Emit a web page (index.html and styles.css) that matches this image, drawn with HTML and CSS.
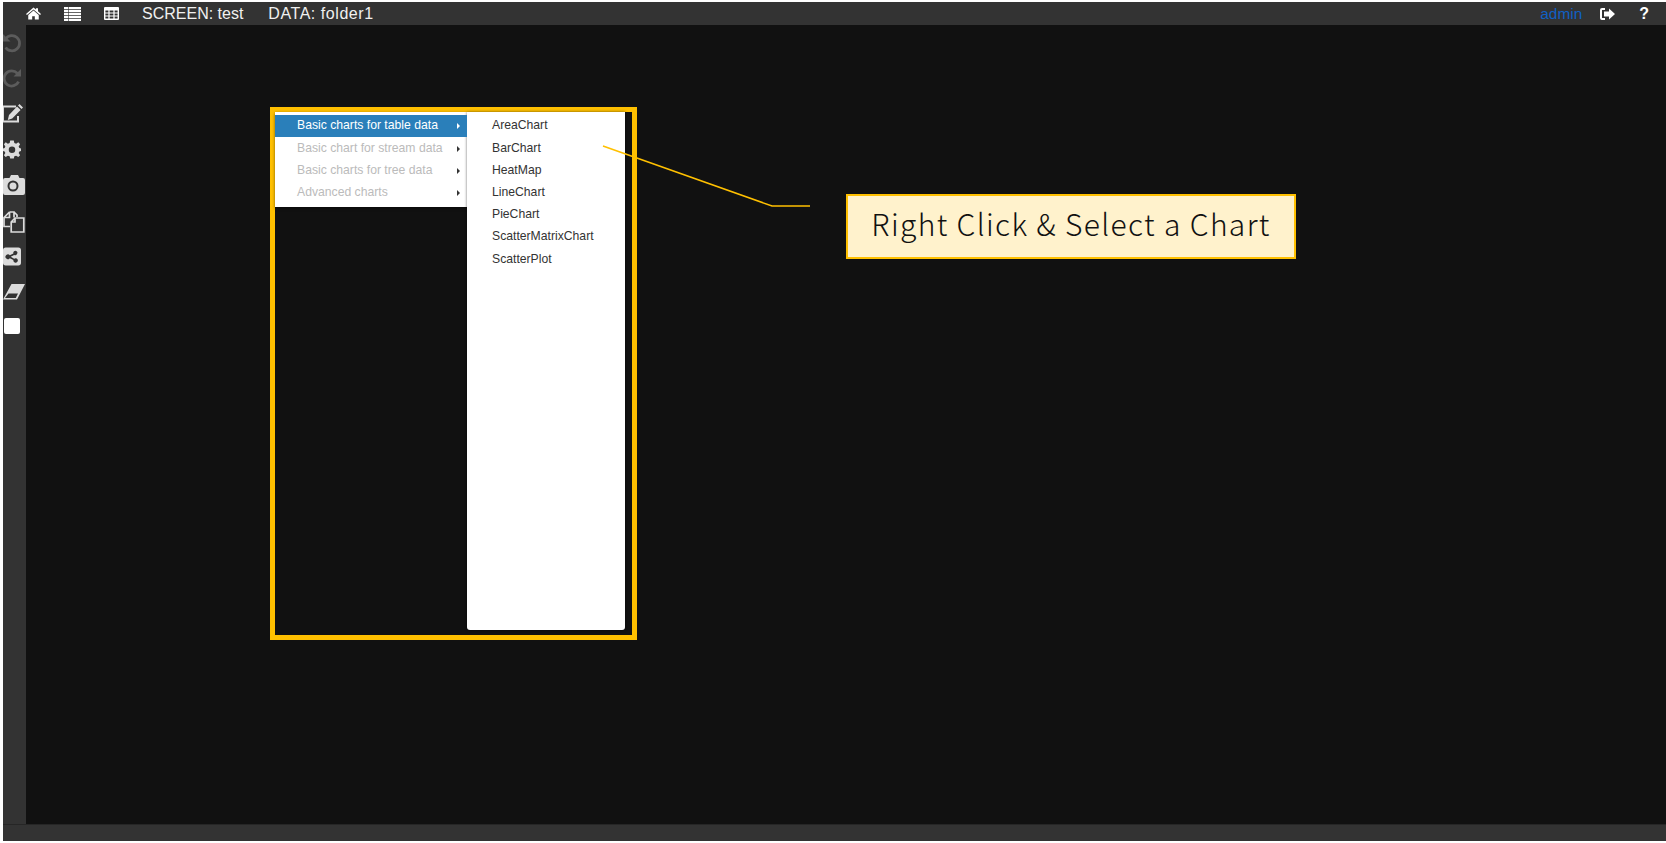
FILE: index.html
```html
<!DOCTYPE html>
<html lang="en">

<head>
    <meta charset="UTF-8" />
    <title>SCREEN: test</title>
    <link rel="stylesheet" href="styles.css">
</head>

<body>
    <div class="app">
        <div class="topbar">
            <svg class="nav-home" viewBox="0 0 16 13"><path d="M8 0 10.6 2.3V1H12.8V4.2L16 7 15 8 8 2.1 1 8 0 7ZM2.4 8 8 3.3 13.6 8V13H9.4V9.4H6.6V13H2.4Z"/></svg>
            <svg class="nav-list" viewBox="0 0 17 14"><path d="M0 0H4V2.2H0ZM0 3H4V5.2H0ZM0 6H4V8.2H0ZM0 9H4V11.2H0ZM0 12H4V14H0ZM4.6 0H17V2.2H4.6ZM4.6 3H17V5.2H4.6ZM4.6 6H17V8.2H4.6ZM4.6 9H17V11.2H4.6ZM4.6 12H17V14H4.6Z"/></svg>
            <svg class="nav-table" viewBox="0 0 15 13"><path fill-rule="evenodd" d="M1 0H14Q15 0 15 1V12Q15 13 14 13H1Q0 13 0 12V1Q0 0 1 0ZM1.4 3.6V5.6H4.4V3.6ZM5.6 3.6V5.6H9.4V3.6ZM10.6 3.6V5.6H13.6V3.6ZM1.4 6.6V8.6H4.4V6.6ZM5.6 6.6V8.6H9.4V6.6ZM10.6 6.6V8.6H13.6V6.6ZM1.4 9.6V11.6H4.4V9.6ZM5.6 9.6V11.6H9.4V9.6ZM10.6 9.6V11.6H13.6V9.6Z"/></svg>
            <span class="nav-text screen-name">SCREEN: test</span>
            <span class="nav-text data-name">DATA: folder1</span>
            <span class="user">admin</span>
            <svg class="nav-out" viewBox="0 0 15 12"><path d="M5 0V2H2.2Q2 2 2 2.2V9.8Q2 10 2.2 10H5V12H2Q0 12 0 10V2Q0 0 2 0ZM9 .5 15 6 9 11.5V8.5H4V3.5H9Z"/></svg>
            <span class="help">?</span>
        </div>
        <div class="main">
            <div class="sidebar">
                <svg class="tool tool-off" viewBox="0 0 20 20"><path d="M0 1V8.5H7.5Z" class="fill-off"/><path d="M2.6 6A7.6 7.6 0 1 1 2.6 14.4" fill="none" stroke-width="2.8"/></svg>
                <svg class="tool tool-off" viewBox="0 0 20 20"><path d="M14.4 5.4A7.6 7.6 0 1 0 15.6 13.6" fill="none" stroke-width="2.8"/><path d="M18 1V8.5H10.5Z" class="fill-off"/></svg>
                <svg class="tool" viewBox="0 0 20 20"><path d="M0 1.5H13V3.5H1V16.5H14V12H16V18.5H0Z"/><path d="M16.5 0 20 3.4 18.5 5 15 1.5ZM14 2.5 17.6 6 9.2 14.6 4.8 16 6 11Z"/></svg>
                <svg class="tool tool-gear" viewBox="0 0 20 20"><path fill-rule="evenodd" d="M8 0H12L12.6 2.8 14.6 3.6 17 2 19 4.2 17.4 6.6 18.2 8.4 20 8.8V11.6L18.2 12.2 17.4 14 19 16.4 17 18.4 14.6 17 12.6 17.6 12 20H8L7.4 17.6 5.4 17 3 18.4 1 16.4 2.6 14 1.8 12.2 0 11.6V8.8L1.8 8.4 2.6 6.6 1 4.2 3 2 5.4 3.6 7.4 2.8ZM10 6.6A3.6 3.6 0 1 0 10 13.8 3.6 3.6 0 0 0 10 6.6Z"/></svg>
                <svg class="tool tool-wide" viewBox="0 0 22 20"><path fill-rule="evenodd" d="M2 3H6.5L8 0H15L16.5 3H20Q22 3 22 5V18Q22 20 20 20H2Q0 20 0 18V5Q0 3 2 3ZM10 5.5A5.5 5.5 0 1 0 10 16.5 5.5 5.5 0 0 0 10 5.5ZM10 7.5A3.5 3.5 0 1 1 10 14.5 3.5 3.5 0 0 1 10 7.5Z"/></svg>
                <svg class="tool tool-wide tool-copy" viewBox="0 0 22 22"><path d="M6.5 1H11V6.5M6.5 1 1 6.5V15.5H7M1 6.5H6.5V1M11 1 14 4V6"/><path d="M12 7H20.8V21H8.2V11ZM12 7V11H8.2"/></svg>
                <svg class="tool tool-share" viewBox="0 0 20 20"><path fill-rule="evenodd" d="M3 0H17Q20 0 20 3V17Q20 20 17 20H3Q0 20 0 17V3Q0 0 3 0ZM14 3.5A2.5 2.5 0 0 0 11.5 6.6L7.6 8.6A2.7 2.7 0 1 0 7.6 12L11.5 14A2.5 2.5 0 1 0 12.4 12.4L8.6 10.3 12.4 8.2A2.5 2.5 0 1 0 14 3.5Z"/></svg>
                <svg class="tool tool-wide tool-eraser" viewBox="0 0 22 16"><path fill-rule="evenodd" d="M8.5 0H22L14 15.5H0ZM5.5 9.5 2 14H12.8L15 9.5Z"/></svg>
                <div class="color-box"></div>
            </div>
            <div class="canvas"></div>
        </div>
        <div class="footer"></div>
    </div>

    <div class="highlight"></div>

    <div class="menu">
        <ul class="menu-list">
            <li class="active">Basic charts for table data</li>
            <li class="off">Basic chart for stream data</li>
            <li class="off">Basic charts for tree data</li>
            <li class="off">Advanced charts</li>
        </ul>
        <ul class="submenu">
            <li>AreaChart</li>
            <li>BarChart</li>
            <li>HeatMap</li>
            <li>LineChart</li>
            <li>PieChart</li>
            <li>ScatterMatrixChart</li>
            <li>ScatterPlot</li>
        </ul>
    </div>

    <svg class="leader" viewBox="0 0 210 64"><path d="M1 1 170 61H208"/></svg>
    <div class="callout">Right Click &amp; Select a Chart</div>
</body>

</html>
```

FILE: styles.css
```css
html, body {
    height: 100%;
}
body {
    margin: 0;
    background: #fff;
    padding: 2px 0 2px 3px;
    box-sizing: border-box;
    overflow: hidden;
    font-family: 'Liberation Sans', Arial, sans-serif;
}
.app {
    height: 100%;
    display: flex;
    flex-direction: column;
    background: #333;
}
.topbar {
    height: 23px;
    display: flex;
    align-items: center;
    color: #fff;
    flex-shrink: 0;
}
.topbar svg {
    fill: #fff;
    flex-shrink: 0;
}
.nav-home {
    width: 15px;
    height: 13px;
    margin-left: 23px;
}
.nav-list {
    width: 17px;
    height: 14px;
    margin-left: 23px;
}
.nav-table {
    width: 15px;
    height: 13px;
    margin-left: 23px;
}
.nav-text {
    font-size: 16px;
    color: #f0f0f0;
}
.screen-name {
    margin-left: 23px;
    margin-right: 25px;
}
.data-name {
    letter-spacing: 0.55px;
}
.user {
    margin-left: auto;
    font-size: 15.4px;
    color: #1060c4;
}
.nav-out {
    width: 15px;
    height: 12px;
    margin-left: 18px;
}
.help {
    margin-left: 24px;
    margin-right: 17px;
    font-size: 16px;
    font-weight: bold;
}
.main {
    flex: 1;
    display: flex;
    min-height: 0;
}
.sidebar {
    width: 23px;
    flex-shrink: 0;
    overflow: hidden;
    padding-top: 7.5px;
    box-sizing: border-box;
    display: flex;
    flex-direction: column;
    align-items: flex-start;
}
.tool {
    width: 20px;
    height: 20px;
    flex-shrink: 0;
    margin-bottom: 15.7px;
    fill: #dcdcdc;
}
.tool-off {
    fill: none;
    stroke: #5c5c5c;
}
.fill-off {
    fill: #5c5c5c;
    stroke: none;
}
.tool-gear, .tool-share {
    width: 18px;
    height: 19px;
}
.tool-gear {
    margin-bottom: 16.7px;
}
.tool-share {
    margin-bottom: 16.7px;
}
.tool-wide {
    width: 22px;
}
.tool-copy {
    fill: none;
    stroke: #dcdcdc;
    stroke-width: 1.7;
    height: 22px;
    margin-bottom: 14px;
}
.tool-eraser {
    height: 16px;
    margin-top: 1px;
    margin-bottom: 18px;
}
.color-box {
    width: 16px;
    height: 16px;
    margin: 0 0 0 1px;
    background: #fff;
    border-radius: 2px;
}
.canvas {
    flex: 1;
    background: #111;
}
.footer {
    height: 17px;
    flex-shrink: 0;
    border-top: 1px solid #262626;
    box-sizing: border-box;
}
.highlight {
    position: absolute;
    left: 270px;
    top: 107px;
    width: 367px;
    height: 533px;
    border: 5px solid #ffc000;
    box-sizing: border-box;
}
.menu {
    position: absolute;
    left: 275px;
    top: 112px;
    display: flex;
    align-items: flex-start;
    font-size: 12.2px;
}
.menu ul {
    margin: 0;
    list-style: none;
    background: #fff;
    padding: 3.4px 0 0;
    box-sizing: border-box;
}
.menu li {
    height: 22.2px;
    line-height: 21px;
    white-space: nowrap;
}
.menu-list {
    width: 192px;
    height: 95px;
    box-shadow: 0 1px 3px rgba(0, 0, 0, 0.5);
}
.menu-list li {
    padding-left: 22px;
    position: relative;
}
.menu-list li::after {
    content: "";
    position: absolute;
    right: 7px;
    top: 8px;
    border-left: 3px solid #333;
    border-top: 3px solid transparent;
    border-bottom: 3px solid transparent;
}
.menu-list .active {
    height: 21.2px;
    margin-bottom: 1px;
    background: #2a7fba;
    color: #fff;
}
.menu-list .active::after {
    border-left-color: #fff;
}
.menu-list .off {
    color: #bbb;
}
.submenu {
    width: 158px;
    height: 518px;
    border-radius: 0 0 3px 3px;
    box-shadow: 0 0 3px rgba(0, 0, 0, 0.6);
    color: #333;
}
.submenu li {
    padding-left: 25px;
}
.leader {
    position: absolute;
    left: 602px;
    top: 145px;
    width: 210px;
    height: 64px;
    fill: none;
    stroke: #ffc000;
    stroke-width: 1.5;
}
.callout {
    position: absolute;
    left: 846px;
    top: 194px;
    width: 450px;
    height: 65px;
    border: 2px solid #ffc000;
    box-sizing: border-box;
    background: #fff2cc;
    color: #111;
    font-family: 'Noto Sans CJK JP', 'Noto Sans', sans-serif;
    font-weight: 300;
    font-size: 30px;
    letter-spacing: 1.35px;
    padding-bottom: 7px;
    display: flex;
    align-items: center;
    justify-content: center;
}
```
